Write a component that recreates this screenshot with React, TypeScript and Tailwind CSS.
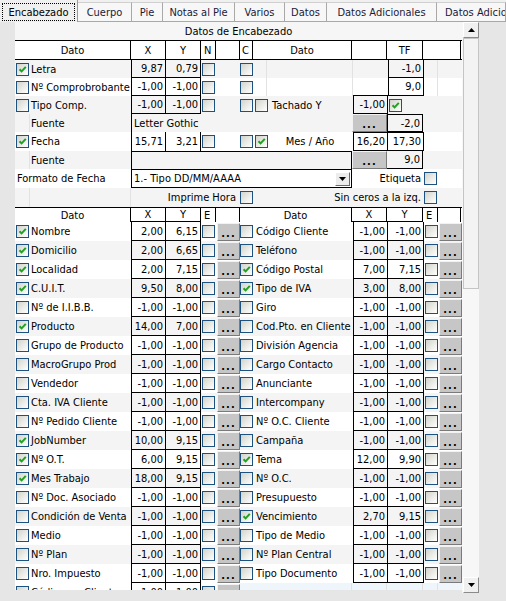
import React from "react";

type Row = { label: string; on: boolean; x: string; y: string };

const left: Row[] = [
  { label: "Nombre", on: true, x: "2,00", y: "6,15" },
  { label: "Domicilio", on: true, x: "2,00", y: "6,65" },
  { label: "Localidad", on: true, x: "2,00", y: "7,15" },
  { label: "C.U.I.T.", on: true, x: "9,50", y: "8,00" },
  { label: "Nº de I.I.B.B.", on: false, x: "-1,00", y: "-1,00" },
  { label: "Producto", on: true, x: "14,00", y: "7,00" },
  { label: "Grupo de Producto", on: false, x: "-1,00", y: "-1,00" },
  { label: "MacroGrupo Prod", on: false, x: "-1,00", y: "-1,00" },
  { label: "Vendedor", on: false, x: "-1,00", y: "-1,00" },
  { label: "Cta. IVA Cliente", on: false, x: "-1,00", y: "-1,00" },
  { label: "Nº Pedido Cliente", on: false, x: "-1,00", y: "-1,00" },
  { label: "JobNumber", on: true, x: "10,00", y: "9,15" },
  { label: "Nº O.T.", on: true, x: "6,00", y: "9,15" },
  { label: "Mes Trabajo", on: true, x: "18,00", y: "9,15" },
  { label: "Nº Doc. Asociado", on: false, x: "-1,00", y: "-1,00" },
  { label: "Condición de Venta", on: false, x: "-1,00", y: "-1,00" },
  { label: "Medio", on: false, x: "-1,00", y: "-1,00" },
  { label: "Nº Plan", on: false, x: "-1,00", y: "-1,00" },
  { label: "Nro. Impuesto", on: false, x: "-1,00", y: "-1,00" },
];

const right: Row[] = [
  { label: "Código Cliente", on: false, x: "-1,00", y: "-1,00" },
  { label: "Teléfono", on: false, x: "-1,00", y: "-1,00" },
  { label: "Código Postal", on: true, x: "7,00", y: "7,15" },
  { label: "Tipo de IVA", on: true, x: "3,00", y: "8,00" },
  { label: "Giro", on: false, x: "-1,00", y: "-1,00" },
  { label: "Cod.Pto. en Cliente", on: false, x: "-1,00", y: "-1,00" },
  { label: "División Agencia", on: false, x: "-1,00", y: "-1,00" },
  { label: "Cargo Contacto", on: false, x: "-1,00", y: "-1,00" },
  { label: "Anunciante", on: false, x: "-1,00", y: "-1,00" },
  { label: "Intercompany", on: false, x: "-1,00", y: "-1,00" },
  { label: "Nº O.C. Cliente", on: false, x: "-1,00", y: "-1,00" },
  { label: "Campaña", on: false, x: "-1,00", y: "-1,00" },
  { label: "Tema", on: true, x: "12,00", y: "9,90" },
  { label: "Nº O.C.", on: false, x: "-1,00", y: "-1,00" },
  { label: "Presupuesto", on: false, x: "-1,00", y: "-1,00" },
  { label: "Vencimiento", on: true, x: "2,70", y: "9,15" },
  { label: "Tipo de Medio", on: false, x: "-1,00", y: "-1,00" },
  { label: "Nº Plan Central", on: false, x: "-1,00", y: "-1,00" },
  { label: "Tipo Documento", on: false, x: "-1,00", y: "-1,00" },
];

const tabs = [
  { t: "Cuerpo", w: "w-[54px]" },
  { t: "Pie", w: "w-[31px]" },
  { t: "Notas al Pie", w: "w-[72px]" },
  { t: "Varios", w: "w-[50px]" },
  { t: "Datos", w: "w-[42px]" },
  { t: "Datos Adicionales", w: "w-[110px]" },
  { t: "Datos Adicionales", w: "w-[69px]" },
];

function Cb({ on }: { on?: boolean }) {
  return (
    <span className="relative block w-[13px] h-[13px] shrink-0 border border-[#1c5180] bg-linear-to-br from-[#d4d4cc] to-white">
      {on && (
        <svg viewBox="0 0 11 11" className="absolute inset-0 w-[11px] h-[11px]">
          <path d="M2.5 5.2 L4.6 7.4 L8.8 2.8" fill="none" stroke="#21a121" strokeWidth="2" />
        </svg>
      )}
    </span>
  );
}

function Dots({ w, empty }: { w: string; empty?: boolean }) {
  return (
    <div
      className={`${w} h-[18px] shrink-0 bg-[#c6c6c6] border border-t-[#f2f2f2] border-l-[#f2f2f2] border-r-[#7a7a7a] border-b-[#7a7a7a] flex items-end justify-center font-bold text-[11px] leading-[13px] tracking-[1px]`}
    >
      {empty ? "" : "..."}
    </div>
  );
}

function Arrow({ up }: { up?: boolean }) {
  return (
    <svg viewBox="0 0 7 4" className="w-[7px] h-[4px]">
      <path d={up ? "M0 4 L3.5 0 L7 4 Z" : "M0 0 L7 0 L3.5 4 Z"} fill="#000" />
    </svg>
  );
}

const num = "flex items-center justify-end pr-[2px] border-black";

function LowerRow({ l, r, bg }: { l: Row; r: Row; bg: string }) {
  return (
    <div className={`flex h-[19px] items-stretch ${bg}`}>
      <div className="w-[15px] flex items-center justify-center">
        <Cb on={l.on} />
      </div>
      <div className="w-[101px] flex items-center pl-[1px] whitespace-nowrap">{l.label}</div>
      <div className={`w-[35px] border-l border-r border-b ${num}`}>{l.x}</div>
      <div className={`w-[35px] border-r border-b ${num}`}>{l.y}</div>
      <div className="w-[15px] flex items-center justify-center">
        <Cb />
      </div>
      <div className="w-[24px] flex items-center pl-[1px]">
        <Dots w="w-[23px]" />
      </div>
      <div className="w-[14px] flex items-center">
        <Cb on={r.on} />
      </div>
      <div className="w-[99px] flex items-center pl-[2px] whitespace-nowrap">{r.label}</div>
      <div className={`w-[35px] border-l border-r border-b ${num}`}>{r.x}</div>
      <div className={`w-[36px] border-r border-b ${num}`}>{r.y}</div>
      <div className="w-[15px] flex items-center pl-[1px]">
        <Cb />
      </div>
      <div className="w-[23px] flex items-center">
        <Dots w="w-[23px]" />
      </div>
    </div>
  );
}

export default function App() {
  const g = "bg-[#f4f4f4]";
  const w = "bg-white";
  const faint = "border-[#e2e2e2]";

  return (
    <div className="w-[506px] h-[601px] overflow-hidden bg-[#e6e6e6] text-[11px] leading-none text-black font-['DejaVu_Sans_Condensed','DejaVu_Sans',sans-serif]">
      {/* tabs */}
      <div className="flex h-[22px] bg-[#f0f0f0]">
        <div className="w-[79px] h-[22px] px-[2px] pt-[3px] pb-[1px] bg-[#f0f0f0] border-r border-[#9a9a9a]">
          <div className="h-full border border-dotted border-black flex items-center justify-center">Encabezado</div>
        </div>
        {tabs.map((t, i) => (
          <div
            key={i}
            className={`${t.w} shrink-0 mt-[2px] h-[20px] flex items-center justify-center whitespace-nowrap overflow-hidden border-r border-b border-t border-[#a8a8a8] border-t-[#d0d0d0] bg-[#f7f7f7] text-[#1a1a3a] ${i === tabs.length - 1 ? "justify-start pl-[8px]" : ""}`}
          >
            {t.t}
          </div>
        ))}
      </div>

      <div className="flex">
        <div className="w-[15px] shrink-0" />

        {/* grid */}
        <div className="w-[447px] h-[568px] shrink-0 overflow-hidden bg-white">
          <div className="h-[18px] bg-[#f6f6f6] flex items-center justify-center">Datos de Encabezado</div>

          {/* top header */}
          <div className="flex h-[20px] border-t border-b border-black bg-white">
            <div className="w-[116px] border-r border-black flex items-center justify-center">Dato</div>
            <div className="w-[35px] border-r border-black flex items-center justify-center">X</div>
            <div className="w-[35px] border-r border-black flex items-center justify-center">Y</div>
            <div className="w-[15px] border-r border-black flex items-center pl-[3px]">N</div>
            <div className="w-[24px] border-r border-black" />
            <div className="w-[13px] border-r border-black flex items-center pl-[2px]">C</div>
            <div className="w-[99px] border-r border-black flex items-center justify-center">Dato</div>
            <div className="w-[35px] border-r border-black" />
            <div className="w-[36px] border-r border-black flex items-center justify-center">TF</div>
            <div className="w-[38px] border-r border-black" />
          </div>

          {/* Letra */}
          <div className={`flex h-[18px] ${g}`}>
            <div className="w-[15px] flex items-center justify-center"><Cb on /></div>
            <div className="w-[101px] flex items-center pl-[1px]">Letra</div>
            <div className={`w-[35px] border-l border-r border-b ${num}`}>9,87</div>
            <div className={`w-[35px] border-r border-b ${num}`}>0,79</div>
            <div className="w-[15px] flex items-center justify-center"><Cb /></div>
            <div className="w-[24px]" />
            <div className="w-[14px] flex items-center"><Cb /></div>
            <div className={`w-[13px] border-r ${faint}`} />
            <div className={`w-[86px] border-r ${faint}`} />
            <div className="w-[35px]" />
            <div className={`w-[36px] border-l border-r border-b ${num}`}>-1,0</div>
            <div className={`w-[14px] border-r ${faint}`} />
          </div>

          {/* Nº Comprobrobante */}
          <div className={`flex h-[18px] ${w}`}>
            <div className="w-[15px] flex items-center justify-center"><Cb /></div>
            <div className="w-[101px] flex items-center pl-[1px] whitespace-nowrap">Nº Comprobrobante</div>
            <div className={`w-[35px] border-l border-r border-b ${num}`}>-1,00</div>
            <div className={`w-[35px] border-r border-b ${num}`}>-1,00</div>
            <div className="w-[15px] flex items-center justify-center"><Cb /></div>
            <div className="w-[24px]" />
            <div className="w-[14px] flex items-center"><Cb /></div>
            <div className={`w-[13px] border-r ${faint}`} />
            <div className={`w-[86px] border-r ${faint}`} />
            <div className="w-[35px] border-b border-black" />
            <div className={`w-[36px] border-l border-r border-b ${num}`}>9,0</div>
            <div className={`w-[14px] border-r ${faint}`} />
          </div>

          {/* Tipo Comp. */}
          <div className={`flex h-[18px] ${g}`}>
            <div className="w-[15px] flex items-center justify-center"><Cb /></div>
            <div className="w-[101px] flex items-center pl-[1px]">Tipo Comp.</div>
            <div className={`w-[35px] border-l border-r border-b ${num}`}>-1,00</div>
            <div className={`w-[35px] border-r border-b ${num}`}>-1,00</div>
            <div className="w-[15px] flex items-center justify-center"><Cb /></div>
            <div className="w-[24px]" />
            <div className="w-[14px] flex items-center"><Cb /></div>
            <div className="w-[14px] flex items-center pl-[1px]"><Cb /></div>
            <div className="w-[85px] flex items-center pl-[4px]">Tachado Y</div>
            <div className={`w-[35px] border-l border-r border-b ${num}`}>-1,00</div>
            <div className="w-[36px] flex items-center pl-[1px]"><Cb on /></div>
          </div>

          {/* Fuente */}
          <div className={`flex h-[18px] ${g}`}>
            <div className={`w-[15px] border-r ${faint}`} />
            <div className="w-[101px] flex items-center pl-[1px]">Fuente</div>
            <div className="w-[221px] border-l border-black flex items-center pl-[2px]">Letter Gothic</div>
            <Dots w="w-[35px]" />
            <div className={`w-[36px] border ${num}`}>-2,0</div>
          </div>

          {/* Fecha */}
          <div className={`flex h-[19px] ${w}`}>
            <div className="w-[15px] flex items-center justify-center"><Cb on /></div>
            <div className="w-[101px] flex items-center pl-[1px]">Fecha</div>
            <div className={`w-[35px] border-l border-r ${num}`}>15,71</div>
            <div className={`w-[35px] border-r ${num}`}>3,21</div>
            <div className="w-[15px] flex items-center justify-center"><Cb /></div>
            <div className="w-[24px]" />
            <div className="w-[14px] flex items-center"><Cb /></div>
            <div className="w-[13px] flex items-center pl-[1px]"><Cb on /></div>
            <div className="w-[86px] flex items-center justify-center">Mes / Año</div>
            <div className={`w-[35px] border-l border-t border-r border-b ${num}`}>16,20</div>
            <div className={`w-[36px] border-t border-r border-b ${num}`}>17,30</div>
          </div>

          {/* Fuente 2 */}
          <div className={`flex h-[18px] ${g}`}>
            <div className={`w-[15px] border-r ${faint}`} />
            <div className="w-[101px] flex items-center pl-[1px]">Fuente</div>
            <div className="w-[221px] border-l border-t border-r border-black" />
            <Dots w="w-[35px]" />
            <div className={`w-[36px] border-r border-b ${num}`}>9,0</div>
          </div>

          {/* Formato de Fecha */}
          <div className={`flex h-[19px] ${w}`}>
            <div className="w-[116px] flex items-center pl-[2px]">Formato de Fecha</div>
            <div className="w-[221px] border border-black flex items-center justify-between pl-[2px] pr-[1px]">
              <span>1.- Tipo DD/MM/AAAA</span>
              <div className="w-[15px] h-[14px] bg-[#ececec] border border-t-white border-l-white border-r-[#6a6a6a] border-b-[#6a6a6a] flex items-center justify-center">
                <Arrow />
              </div>
            </div>
            <div className="w-[71px] flex items-center justify-end pr-[2px]">Etiqueta</div>
            <div className="w-[15px] flex items-center pl-[1px]"><Cb /></div>
          </div>

          {/* Imprime Hora */}
          <div className={`flex h-[19px] ${g}`}>
            <div className={`w-[15px] border-r ${faint}`} />
            <div className={`w-[101px] border-r ${faint}`} />
            <div className="w-[109px] flex items-center justify-end pr-[4px]">Imprime Hora</div>
            <div className="w-[14px] flex items-center"><Cb /></div>
            <div className="w-[169px] flex items-center justify-end pr-[2px]">Sin ceros a la izq.</div>
            <div className="w-[15px] flex items-center pl-[1px]"><Cb /></div>
          </div>

          {/* lower header */}
          <div className="flex h-[15px] border-t border-black bg-white">
            <div className="w-[116px] border-r border-black flex items-center justify-center">Dato</div>
            <div className="w-[35px] border-r border-b border-black flex items-center justify-center">X</div>
            <div className="w-[35px] border-r border-b border-black flex items-center justify-center">Y</div>
            <div className="w-[15px] border-r border-black flex items-center pl-[3px]">E</div>
            <div className="w-[24px] border-r border-black" />
            <div className="w-[112px] border-r border-black flex items-center justify-center">Dato</div>
            <div className="w-[35px] border-r border-b border-black flex items-center justify-center">X</div>
            <div className="w-[36px] border-r border-b border-black flex items-center justify-center">Y</div>
            <div className="w-[15px] border-r border-black flex items-center pl-[3px]">E</div>
            <div className="w-[23px] border-r border-black" />
          </div>

          {left.map((l, i) => (
            <LowerRow key={i} l={l} r={right[i]} bg={i % 2 === 0 ? w : g} />
          ))}

          {/* partial last row */}
          <div className="flex h-[19px] bg-white">
            <div className="w-[15px] flex items-center justify-center"><Cb /></div>
            <div className="w-[101px] flex items-center pl-[1px] whitespace-nowrap">Código en Cliente</div>
            <div className={`w-[35px] border-l border-r border-b ${num}`}>-1,00</div>
            <div className={`w-[35px] border-r border-b ${num}`}>-1,00</div>
            <div className="w-[15px] flex items-center justify-center"><Cb /></div>
            <div className="w-[24px] flex items-center pl-[1px]"><Dots w="w-[23px]" empty /></div>
            <div className="flex-1 flex bg-[#eef6fc]">
              <div className={`w-[112px] border-r ${faint}`} />
              <div className={`w-[35px] border-r ${faint}`} />
              <div className={`w-[36px] border-r ${faint}`} />
              <div className={`w-[15px] border-r ${faint}`} />
            </div>
          </div>
        </div>

        {/* scrollbar */}
        <div className="w-[17px] h-[571px] shrink-0 flex flex-col bg-[#f7f7f7] pl-[1px]">
          <div className="h-[16px] bg-[#f0f0f0] border border-t-white border-l-white border-r-[#8a8a8a] border-b-[#8a8a8a] flex items-center justify-center">
            <Arrow up />
          </div>
          <div className="h-[251px] bg-[#f3f3f3] border border-[#c4c4c4]" />
          <div className="flex-1" />
          <div className="h-[16px] bg-[#f0f0f0] border border-t-white border-l-white border-r-[#8a8a8a] border-b-[#8a8a8a] flex items-center justify-center">
            <Arrow />
          </div>
        </div>
        <div className="flex-1" />
      </div>
    </div>
  );
}
